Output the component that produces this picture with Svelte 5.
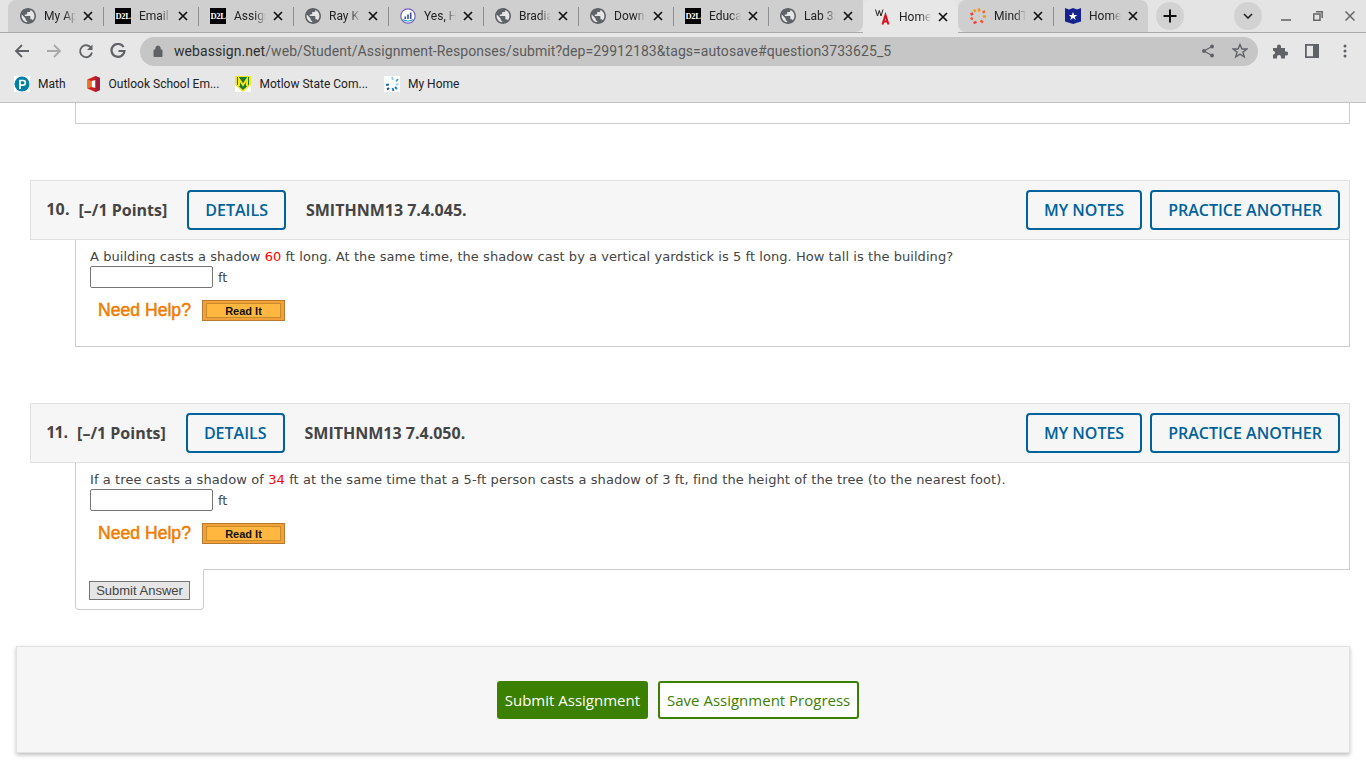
<script>
    const tabs = [
        { icon: "globe", title: "My Apps" },
        { icon: "d2l", title: "Email" },
        { icon: "d2l", title: "Assign" },
        { icon: "globe", title: "Ray K" },
        { icon: "chart", title: "Yes, H" },
        { icon: "globe", title: "Bradia" },
        { icon: "globe", title: "Down" },
        { icon: "d2l", title: "Educa" },
        { icon: "globe", title: "Lab 3:" },
        { icon: "wa", title: "Home", active: true },
        { icon: "mind", title: "MindT" },
        { icon: "shield", title: "Home" }
    ];
    const questions = [
        {
            num: "10.",
            code: "SMITHNM13 7.4.045.",
            before: "A building casts a shadow ",
            value: "60",
            after: " ft long. At the same time, the shadow cast by a vertical yardstick is 5 ft long. How tall is the building?",
            spacing: 0.056
        },
        {
            num: "11.",
            code: "SMITHNM13 7.4.050.",
            before: "If a tree casts a shadow of ",
            value: "34",
            after: " ft at the same time that a 5-ft person casts a shadow of 3 ft, find the height of the tree (to the nearest foot).",
            spacing: 0.094
        }
    ];
</script>

<div class="chrome">
    <div class="tabstrip">
        {#each tabs as tab, i}
            <div class="tab" class:active={tab.active} class:sep={i < tabs.length - 1 && !tab.active && !tabs[i + 1].active}>
                <span class="fav">
                    {#if tab.icon == "globe"}
                        <svg viewBox="2 2 20 20" width="16" height="16"><circle cx="12" cy="12" r="9" fill="#e6e6e6"/><path d="M12 2C6.480 2 2 6.480 2 12s4.480 10 10 10 10-4.480 10-10S17.520 2 12 2zm-1 17.930c-3.950-.490-7-3.850-7-7.930 0-.620.080-1.210.210-1.790L9 15v1c0 1.100.900 2 2 2v1.930zm6.900-2.540c-.260-.810-1-1.390-1.900-1.390h-1v-3c0-.550-.450-1-1-1H8v-2h2c.550 0 1-.450 1-1V7h2c1.100 0 2-.900 2-2v-.410c2.930 1.190 5 4.060 5 7.410 0 2.080-.800 3.970-2.100 5.390z" fill="#5f6368"/></svg>
                    {:else if tab.icon == "d2l"}
                        <span class="d2l">D2L</span>
                    {:else if tab.icon == "chart"}
                        <svg viewBox="0 0 16 16" width="16" height="16"><circle cx="8" cy="8" r="7.200" fill="#fff" stroke="#7a5cc0" stroke-width="1.200"/><path d="M4.500 8.500h1.600V11H4.500zM7.200 6.500h1.600V11H7.200zM9.900 4.500h1.600V11H9.900z" fill="#3c4fa8"/><path d="M2.500 11.500q5.500 3 11 0" stroke="#2aa3b8" stroke-width="1.200" fill="none"/></svg>
                    {:else if tab.icon == "wa"}
                        <svg viewBox="0 0 16 16" width="16" height="16"><path d="M7.500 15.500 10.500 6 13.500 15.500M8.800 12.500H12.200" stroke="#d8121f" stroke-width="2" fill="none"/><path d="M0.500 0.500 2.500 7 4.300 1.500 6 7 8 0.500" stroke="#222" stroke-width="1" fill="none"/></svg>
                    {:else if tab.icon == "mind"}
                        <svg viewBox="0 0 16 16" width="16" height="16" fill="none" stroke-width="2.400"><path d="M8.500 0.500 9.500 3.500" stroke="#f7941d"/><path d="M12.500 4.500 15 3.200" stroke="#f26522"/><path d="M12.800 8.500 16 8.500" stroke="#f7941d"/><path d="M10.500 12.500 13 14.500" stroke="#f15a29"/><path d="M3.500 15 6.500 13.800" stroke="#ef4136"/><path d="M0.500 10 3 11.200" stroke="#f15a29"/><path d="M0.500 6.500 3.200 5.500" stroke="#ef4136"/><path d="M4 1.500 5.500 4" stroke="#f7941d"/></svg>
                    {:else if tab.icon == "shield"}
                        <svg viewBox="0 0 16 16" width="16" height="16"><path d="M0 0 4 1.500 8 0 12 1.500 16 0V13.500L8 16 0 13.500Z" fill="#16238f"/><path d="M8 4 9.200 7H12.200L9.800 8.900 10.700 12 8 10.100 5.300 12 6.200 8.900 3.800 7H6.800Z" fill="#fff"/></svg>
                    {/if}
                </span>
                <span class="tab-title">{tab.title}</span>
                <svg class="tab-x" viewBox="0 0 10 10" width="10" height="10"><path d="M1 1 9 9M9 1 1 9" stroke="#111" stroke-width="1.700"/></svg>
            </div>
        {/each}
        <div class="round new-tab">
            <svg viewBox="0 0 14 14" width="14" height="14"><path d="M7 0.500V13.500M0.500 7H13.500" stroke="#111" stroke-width="2"/></svg>
        </div>
        <div class="round tab-search">
            <svg viewBox="0 0 10 6" width="10" height="6"><path d="M1 1 5 5 9 1" stroke="#222" stroke-width="1.600" fill="none"/></svg>
        </div>
        <div class="win-controls">
            <svg viewBox="0 0 10 10" width="10" height="10"><path d="M0 9H10" stroke="#666" stroke-width="1.600"/></svg>
            <svg viewBox="0 0 10 10" width="10" height="10"><path d="M3 .800H9.200V7M.800 3H7V9.200H.800Z" stroke="#666" stroke-width="1.500" fill="none"/></svg>
            <svg viewBox="0 0 10 10" width="10" height="10"><path d="M.500 .500 9.500 9.500M9.500 .500 .500 9.500" stroke="#666" stroke-width="1.500"/></svg>
        </div>
    </div>
    <div class="toolbar">
        <div class="nav-icons">
            <svg viewBox="0 0 16 16" width="16" height="16"><path d="M15 8H2M8 2 2 8 8 14" stroke="#5f6368" stroke-width="1.800" fill="none"/></svg>
            <svg viewBox="0 0 16 16" width="16" height="16"><path d="M1 8H14M8 2 14 8 8 14" stroke="#a8a8a8" stroke-width="1.800" fill="none"/></svg>
            <svg viewBox="0 0 16 16" width="16" height="16"><path d="M13.200 5A6 6 0 1 0 14 9.500" stroke="#5f6368" stroke-width="1.800" fill="none"/><path d="M14.500 1.500V7H9Z" fill="#5f6368"/></svg>
            <svg viewBox="0 0 16 16" width="16" height="16"><path d="M13.600 4A6.500 6.500 0 1 0 14.500 8H8.500" stroke="#5f6368" stroke-width="2.200" fill="none"/></svg>
        </div>
        <div class="omnibox">
            <svg class="lock" viewBox="0 0 10 12" width="10" height="12"><path d="M1 5H9V11.500H1ZM2.800 5V3.200A2.200 2.200 0 0 1 7.200 3.200V5" fill="#5f6368" stroke="#5f6368" stroke-width="1"/></svg>
            <span class="url"><span class="host">webassign.net</span>/web/Student/Assignment-Responses/submit?dep=29912183&amp;tags=autosave#question3733625_5</span>
            <svg class="omni-icon share" viewBox="0 0 14 14" width="14" height="14"><path d="M11 2.500 3 7 11 11.500" stroke="#5f6368" stroke-width="1.200" fill="none"/><circle cx="11" cy="2.500" r="2" fill="#5f6368"/><circle cx="3" cy="7" r="2" fill="#5f6368"/><circle cx="11" cy="11.500" r="2" fill="#5f6368"/></svg>
            <svg class="omni-icon star" viewBox="0 0 16 16" width="16" height="16"><path d="M8 1.500 9.900 6H14.800L10.900 9.100 12.300 14 8 11.200 3.700 14 5.100 9.100 1.200 6H6.100Z" stroke="#5f6368" stroke-width="1.400" fill="none"/></svg>
        </div>
        <div class="right-icons">
            <svg viewBox="0 0 16 16" width="16" height="16"><path d="M1 5H5V3.500A2 2 0 0 1 9 3.500V5H13V8.500H14.200A2 2 0 0 1 14.200 12.500H13V15.500H9V14A2 2 0 0 0 5 14V15.500H1V11.500H2A2 2 0 0 0 2 8H1Z" fill="#5f6368"/></svg>
            <svg viewBox="0 0 14 14" width="14" height="14"><path d="M0 0H14V14H0ZM1.800 1.800V12.200H8V1.800Z" fill="#5f6368" fill-rule="evenodd"/></svg>
            <svg class="dots" viewBox="0 0 4 14" width="4" height="14"><circle cx="2" cy="2" r="1.500" fill="#5f6368"/><circle cx="2" cy="7" r="1.500" fill="#5f6368"/><circle cx="2" cy="12" r="1.500" fill="#5f6368"/></svg>
        </div>
    </div>
    <div class="bookmarks">
        <div class="bm math">
            <svg viewBox="0 0 16 16" width="16" height="16"><rect width="16" height="16" fill="#fff"/><circle cx="8" cy="8" r="7.500" fill="#007fa3"/><path d="M6 13V4.500H9A2.300 2.300 0 0 1 9 9.200H6" stroke="#fff" stroke-width="1.700" fill="none"/></svg>
            <span>Math</span>
        </div>
        <div class="bm outlook">
            <svg viewBox="0 0 16 16" width="16" height="16"><path d="M1.500 3.500 9.500 0 14 2V14L9.500 16 1.500 12.500Z" fill="#c8201c"/><path d="M5.500 5 9.500 4V12L5.500 11Z" fill="#fff"/><path d="M1.500 3.500 5.500 5V11L1.500 12.500Z" fill="#e8732c"/><path d="M9.500 0 14 2V14L9.500 16Z" fill="#a31a3a"/></svg>
            <span>Outlook School Em...</span>
        </div>
        <div class="bm motlow">
            <svg viewBox="0 0 16 16" width="16" height="16"><rect width="16" height="16" fill="#fff"/><path d="M0 0H16V9L8 16 0 9Z" fill="#f3e61d"/><path d="M2 1H14V8.500L8 14 2 8.500Z" fill="#1a7a3a"/><path d="M4 10V3L8 9 12 3V10" stroke="#f3e61d" stroke-width="2" fill="none"/></svg>
            <span>Motlow State Com...</span>
        </div>
        <div class="bm home">
            <svg viewBox="0 0 16 16" width="16" height="16" fill="none" stroke-width="2"><rect width="16" height="16" fill="#fff"/><path d="M8 1 9 4" stroke="#8fd0e8"/><path d="M14 3 12 5.500" stroke="#4aa8d8"/><path d="M13 13 11 11" stroke="#1d7fc0"/><path d="M9.500 15 8.500 12" stroke="#1d7fc0"/><path d="M2 9 5 8.500" stroke="#1d6fa8"/><path d="M3 13.500 5 12" stroke="#134f80"/><path d="M14.500 8.500 12 8.500" stroke="#8fd0e8"/></svg>
            <span>My Home</span>
        </div>
    </div>
</div>

<div class="page">
    <div class="prev-box"></div>

    {#each questions as q, i}
        <section class="question">
            <header class="q-head">
                <span class="q-num">{q.num}</span>
                <span class="q-points">[–/1 Points]</span>
                <button class="outline details">DETAILS</button>
                <span class="q-code">{q.code}</span>
                <span class="spacer"></span>
                <button class="outline">MY NOTES</button>
                <button class="outline">PRACTICE ANOTHER</button>
            </header>
            <div class="q-body">
                <p class="q-text" style="letter-spacing: {q.spacing}px">{q.before}<span class="val">{q.value}</span>{q.after}</p>
                <div class="answer"><input type="text" /><span>ft</span></div>
                <div class="help">
                    <span class="need">Need Help?</span>
                    <span class="read-it"><span>Read It</span></span>
                </div>
            </div>
            {#if i == questions.length - 1}
                <div class="submit-tab"><button class="submit-answer">Submit Answer</button></div>
            {/if}
        </section>
    {/each}

    <footer class="actions">
        <button class="primary">Submit Assignment</button>
        <button class="secondary">Save Assignment Progress</button>
    </footer>
</div>

<style>
    :global(body) {
        margin: 0;
        background: #fff;
        overflow: hidden;
    }
    .chrome {
        height: 103px;
        background: #e7e7e7;
        border-bottom: 1px solid #c4c4c4;
        box-sizing: border-box;
        font-family: Roboto, "Liberation Sans", sans-serif;
    }
    .tabstrip {
        height: 33px;
        box-sizing: border-box;
        display: flex;
        align-items: flex-end;
        padding-left: 8px;
        border-bottom: 1px solid #a9a9a9;
        background: #e4e4e4;
    }
    .tab {
        width: 95px;
        height: 32px;
        box-sizing: border-box;
        flex: none;
        display: flex;
        align-items: center;
        padding-left: 12px;
        background: #cfcfcf;
        position: relative;
        font-size: 12px;
        color: #222;
    }
    .tab:first-child,
    .tab:nth-child(11) {
        border-top-left-radius: 8px;
    }
    .tab:nth-child(9) {
        border-bottom-right-radius: 8px;
    }
    .tab:nth-child(11) {
        border-bottom-left-radius: 8px;
    }
    .tab:nth-child(12) {
        border-top-right-radius: 8px;
    }
    .tab.active {
        background: #e7e7e7;
        height: 33px;
        margin-bottom: -1px;
        border-radius: 8px 8px 0 0;
        z-index: 1;
    }
    .tab.sep::after {
        content: "";
        position: absolute;
        right: -1px;
        top: 7px;
        height: 19px;
        width: 1px;
        background: #8f8f8f;
        z-index: 1;
    }
    .fav {
        width: 16px;
        height: 16px;
        display: flex;
        flex: none;
    }
    .d2l {
        width: 16px;
        height: 16px;
        background: #000;
        color: #fff;
        font: bold 8.500px "Liberation Serif", serif;
        display: flex;
        align-items: center;
        justify-content: center;
        letter-spacing: -0.4px;
    }
    .tab-title {
        margin-left: 8px;
        width: 32px;
        overflow: hidden;
        white-space: nowrap;
        mask-image: linear-gradient(to right, #000 65%, transparent 100%);
    }
    .tab-x {
        margin-left: 7px;
        flex: none;
    }
    .round {
        width: 28px;
        height: 28px;
        border-radius: 50%;
        background: #d2d2d2;
        display: flex;
        align-items: center;
        justify-content: center;
        flex: none;
        align-self: center;
    }
    .new-tab {
        margin-left: 8px;
    }
    .tab-search {
        margin-left: 50px;
    }
    .win-controls {
        display: flex;
        align-items: center;
        align-self: center;
        gap: 22px;
        margin-left: 19px;
    }
    .toolbar {
        height: 36px;
        display: flex;
        align-items: center;
        padding-left: 14px;
    }
    .nav-icons {
        display: flex;
        align-items: center;
        gap: 16px;
        width: 126px;
        flex: none;
    }
    .omnibox {
        width: 1118px;
        height: 29px;
        flex: none;
        box-sizing: border-box;
        background: #c6c6c6;
        border-radius: 15px;
        display: flex;
        align-items: center;
        padding-left: 13px;
        font-size: 14px;
        color: #5a5a5a;
    }
    .lock {
        flex: none;
    }
    .url {
        margin-left: 11px;
        flex: 1;
        white-space: nowrap;
        letter-spacing: 0.07px;
    }
    .host {
        color: #2e2e2e;
    }
    .omni-icon {
        flex: none;
    }
    .omni-icon.share {
        margin-right: 17px;
    }
    .omni-icon.star {
        margin-right: 10px;
    }
    .right-icons {
        display: flex;
        align-items: center;
        margin-left: 14px;
        gap: 17px;
    }
    .right-icons .dots {
        margin-left: 7px;
    }
    .bookmarks {
        height: 30px;
        display: flex;
        align-items: center;
        padding-left: 14px;
        font-size: 12px;
        color: #222;
    }
    .bm {
        display: flex;
        align-items: center;
        gap: 8px;
    }
    .outlook {
        margin-left: 20px;
        gap: 7px;
    }
    .motlow {
        margin-left: 16px;
    }
    .home {
        margin-left: 16px;
    }

    .page {
        height: 665px;
        overflow: hidden;
        font-family: "DejaVu Sans", Verdana, sans-serif;
        color: #444;
    }
    .prev-box {
        height: 21px;
        margin: -1px 16px 0 75px;
        box-sizing: content-box;
        border: 1px solid #ccc;
        border-top: none;
    }
    .question {
        margin: 56px 16px 0 30px;
    }
    .q-head {
        height: 60px;
        box-sizing: border-box;
        background: #f6f6f6;
        border: 1px solid #e0e0e0;
        display: flex;
        align-items: center;
        padding: 0 9px 0 16px;
        font-family: "Open Sans", sans-serif;
        font-weight: 700;
        color: #444;
    }
    .q-num {
        font-size: 16px;
        margin-top: -2px;
        font-variant-numeric: proportional-nums;
    }
    .q-points {
        font-size: 16px;
        margin-left: 9px;
    }
    .q-code {
        font-size: 16px;
        margin-left: 20px;
    }
    .spacer {
        flex: 1;
    }
    .outline {
        height: 40px;
        padding: 0 16px;
        box-sizing: border-box;
        background: #f6f6f6;
        border: 2px solid #00629b;
        border-radius: 4px;
        color: #00629b;
        font: 600 16px "Open Sans", sans-serif;
        margin-left: 8px;
    }
    .outline.details {
        margin-left: 20px;
    }
    .q-body {
        margin-left: 45px;
        height: 107px;
        box-sizing: border-box;
        border: 1px solid #ccc;
        border-top: none;
        padding: 9px 0 0 14px;
        font-size: 13px;
    }
    .q-text {
        margin: 0;
        line-height: 16px;
    }
    .val {
        color: #f00;
    }
    .answer {
        display: flex;
        align-items: center;
        gap: 5px;
        margin-top: 1px;
    }
    .answer input {
        width: 123px;
        height: 22px;
        box-sizing: border-box;
        border: 1px solid #767676;
        border-radius: 2px;
        background: #fff;
        padding: 0;
        margin: 0;
    }
    .help {
        display: flex;
        align-items: center;
        margin: 12px 0 0 8px;
    }
    .need {
        font: 17.600px "Liberation Sans", sans-serif;
        color: #ef7d00;
        -webkit-text-stroke: 0.5px #ef7d00;
        width: 104px;
    }
    .read-it {
        width: 83px;
        height: 21px;
        box-sizing: border-box;
        background: #f2a03a;
        border: 1px solid #b87a2c;
        padding: 2px 3px;
        display: flex;
    }
    .read-it span {
        flex: 1;
        background: #ffb73f;
        border: 1px solid #c98a2c;
        display: flex;
        align-items: center;
        justify-content: center;
        font: bold 11px "Liberation Sans", sans-serif;
        color: #111;
    }
    .submit-tab {
        width: 129px;
        height: 41px;
        margin: -1px 0 0 45px;
        box-sizing: border-box;
        background: #fff;
        border: 1px solid #ccc;
        border-top-color: #fff;
        border-radius: 0 0 4px 4px;
        padding: 11px 0 0 13px;
        position: relative;
    }
    .submit-answer {
        width: 101px;
        height: 19px;
        box-sizing: border-box;
        padding: 0;
        border: 1px solid #767676;
        background: #e6e6e6;
        color: #444;
        font: 13px "Liberation Sans", sans-serif;
        display: block;
    }
    .actions {
        margin: 36px 16px 0 16px;
        height: 107px;
        box-sizing: border-box;
        background: #f6f6f6;
        border: 1px solid #e2e2e2;
        box-shadow: 0 2px 4px rgba(0, 0, 0, 0.25);
        display: flex;
        align-items: center;
        justify-content: center;
        gap: 10px;
        padding-right: 10px;
    }
    .primary,
    .secondary {
        height: 38px;
        box-sizing: border-box;
        border-radius: 3px;
        font: 15px "Open Sans", sans-serif;
        padding: 0 8px;
    }
    .primary {
        background: #3c8000;
        border: none;
        color: #fff;
    }
    .secondary {
        background: #fff;
        border: 2px solid #3c8000;
        color: #3c8000;
        padding: 0 7px;
    }
</style>
